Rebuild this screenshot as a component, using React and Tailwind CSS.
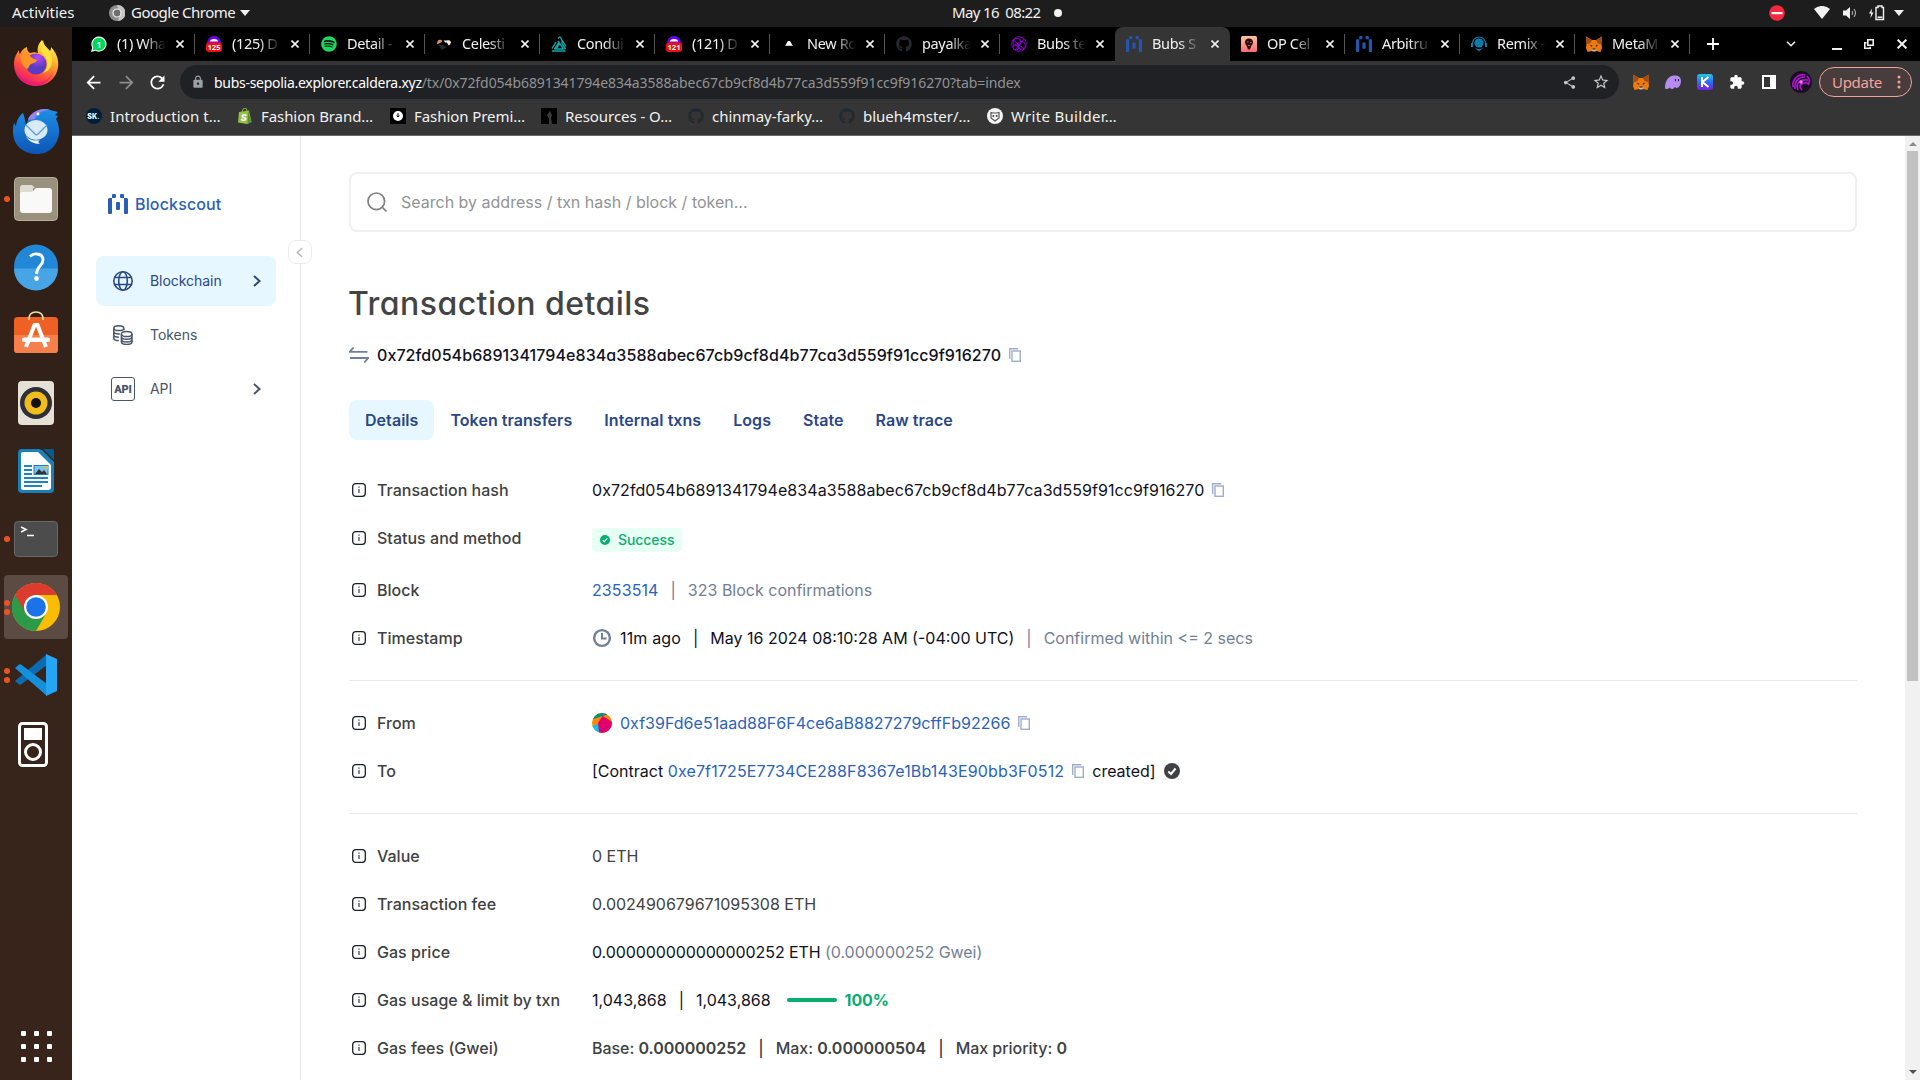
import React from 'react';
import { FaGithub, FaSpotify } from 'react-icons/fa';
import { MdArrowBack, MdArrowForward, MdRefresh, MdLock, MdShare, MdStarBorder, MdExtension } from 'react-icons/md';

/* ---------- favicons ---------- */

function WhatsApp() {
  return (
    <svg viewBox="0 0 16 16" className="size-4">
      <path d="M0 16 1.2 11.6A7.6 7.6 0 1 1 4.4 14.8Z" fill="#fff" />
      <path d="M1.5 14.6 2.3 11.5A6.5 6.5 0 1 1 4.6 13.8Z" fill="#00d757" />
      <text x="8" y="11.6" textAnchor="middle" fontSize="9.5" fontWeight="600" fill="#fff" fontFamily="Noto Sans">1</text>
    </svg>
  );
}

function CountIcon({ count }) {
  return (
    <svg viewBox="0 0 16 16" className="size-4">
      <path d="M1 8a7 8 0 0 1 14 0z" fill="#6d00f6" />
      <path d="M4 5.5a4 2.5 0 0 1 8 0z" fill="#fff" />
      <rect y="6.5" width="16" height="9.5" rx="3" fill="#f60c0c" />
      <text x="8" y="14.2" textAnchor="middle" fontSize="7.6" fontWeight="700" fill="#fff" fontFamily="Noto Sans">{count}</text>
    </svg>
  );
}

function Celestia() {
  return (
    <svg viewBox="0 0 16 16" className="size-4">
      <path d="M1 8.500C1 5 2 3.800 4 3.800S6.500 5 6 6z" fill="#d98e5f" />
      <path d="M10 5.500c1-1.700 4.500-1.700 4.800.8 0 1.500-1 3-2 3.200z" fill="#ffe8cf" />
      <path d="M7.500 4.500h3.500l-1 2.500z" fill="#fff" />
      <path d="M2.500 9h5l3 2.500-5 2.500z" fill="#2c262c" />
    </svg>
  );
}

function Conduit() {
  return (
    <svg viewBox="0 0 16 16" className="size-4" fill="none" stroke="#12a5a8" strokeWidth="1.400">
      <path d="M1 12.500 5 6M7 2.500 9 1l6 9.500M7 5l5.500 8H5l3.500-5.500M1 15h13.500M3 12.500h1L7.500 7M11 4.500v3l3.500 5.500" />
    </svg>
  );
}

function Triangle() {
  return <svg viewBox="0 0 16 16" className="size-4"><path d="M8 5c2 0 1.600 1.700 4 4.700H4C6.400 6.700 6 5 8 5" fill="#fff" /></svg>;
}

function Bubbles() {
  return (
    <svg viewBox="0 0 16 16" className="size-4" fill="none" stroke="#8a00cf" strokeWidth="1">
      <circle cx="8" cy="8" r="7.300" />
      <circle cx="6" cy="6" r="3.800" />
      <circle cx="10.500" cy="9.500" r="4" />
      <circle cx="5" cy="11" r="3" />
      <path d="M2 4l11 9M13 3 4 14" />
    </svg>
  );
}

function BlockscoutMark({ className = 'size-4', fill = '#2456b0' }) {
  return (
    <svg viewBox="0 0 20 20" className={className} fill={fill}>
      <path d="M0 4.500h1V4h3V1a1 1 0 0 1 1-1h2a1 1 0 0 1 1 1v2a1 1 0 0 1-1 1H4v15a1 1 0 0 1-1 1H1a1 1 0 0 1-1-1z" />
      <path d="M20 4.500h-1V4h-3V1a1 1 0 0 0-1-1h-2a1 1 0 0 0-1 1v2a1 1 0 0 0 1 1h3v15a1 1 0 0 0 1 1h2a1 1 0 0 0 1-1z" />
      <rect x="8" y="8" width="4" height="8" rx="1" />
    </svg>
  );
}

function OpCel() {
  return (
    <svg viewBox="0 0 16 16" className="size-4">
      <defs><linearGradient id="opc" x2="0" y2="1"><stop stopColor="#ffc39c" /><stop offset="1" stopColor="#ff6a78" /></linearGradient></defs>
      <rect width="16" height="16" rx="1.500" fill="url(#opc)" />
      <path d="M8 2.500c2.500 0 4 1.500 4 4 0 1.700-1 2.500-1.500 3L9 13.500H7L5.500 9.500C5 9 4 8.200 4 6.500c0-2.500 1.500-4 4-4" fill="#2a0d10" />
      <path d="M6 5.500h1.500v1H6zM9 6h1.500v1H9zM7 9h2v1H7z" fill="#c9535a" />
    </svg>
  );
}

function Remix() {
  return (
    <svg viewBox="0 0 16 16" className="size-4">
      <path d="M1.500 8.500v-1a6.500 6.500 0 0 1 13 0v1" fill="none" stroke="#0a7cae" strokeWidth="1.100" />
      <circle cx="8" cy="7" r="4.600" fill="#0a7cae" />
      <path d="M0 7h2v4H0zM14 7h2v4h-2zM4 12l4 3.500 4-3.500-4 1.200z" fill="#0a7cae" />
    </svg>
  );
}

function Fox() {
  return (
    <svg viewBox="0 0 16 16" className="size-4">
      <path d="M0 .5 6 4h4l6-3.500-.5 7.500.5 4-1.500 4L10 15H6l-4.500 1L0 12l.5-4z" fill="#f0790f" />
      <path d="M0 .5 6 4 4.500 7 .5 8.500zM16 .5 10 4l1.500 3 4 1.500z" fill="#a04f16" />
      <path d="M3.500 8.500 6.300 9.500 6 11zM12.500 8.500 9.700 9.500 10 11z" fill="#2b2b2b" />
      <path d="M5.500 13h5l-1 2.500h-3z" fill="#c9bdb5" />
      <path d="M6.700 12.600h2.600l.4 1H6.300z" fill="#161616" />
    </svg>
  );
}

/* ---------- top bar ---------- */

function TopBar() {
  return (
    <div className="grid h-[27px] shrink-0 grid-cols-[952px_auto_1fr] items-center bg-[#1d1d1d] pb-[2px] text-[15px] text-[#f2f2f2]">
      <div className="flex items-center">
        <span className="ml-3 w-[62px]">Activities</span>
        <svg viewBox="0 0 16 16" className="ml-[35px] size-4">
          <circle cx="8" cy="8" r="8" fill="#8e8e8e" />
          <path d="M8 0a8 8 0 0 1 1 16l2-7z" fill="#c6c6c6" />
          <circle cx="8" cy="8" r="4" fill="#6e6e6e" stroke="#f0f0f0" strokeWidth="1.200" />
        </svg>
        <span className="ml-[6px] w-[104px] tracking-[-0.5px] whitespace-nowrap">Google Chrome</span>
        <svg viewBox="0 0 10 6" className="ml-[5px] h-[6px] w-[10px]"><path d="M0 0h10L5 6z" fill="#f2f2f2" /></svg>
      </div>
      <div className="flex items-center">
        <span className="w-[89px] tracking-[-0.65px] whitespace-pre">May 16  08:22</span>
        <span className="ml-[13px] size-2 rounded-full bg-[#f2f2f2]" />
      </div>
      <div className="flex items-center justify-end pr-4">
        <svg viewBox="0 0 16 16" className="size-4"><circle cx="8" cy="8" r="7.800" fill="#f52840" /><rect x="2.500" y="7" width="11" height="2.200" fill="#fff" /></svg>
        <svg viewBox="0 0 16 13" className="ml-[29px] h-[13px] w-4"><path d="M0 3a12 12 0 0 1 16 0L8 13z" fill="#f2f2f2" /></svg>
        <svg viewBox="0 0 16 14" className="ml-[12px] h-[14px] w-4">
          <path d="M1 4.500h3L8 1v12L4 9.500H1z" fill="#f2f2f2" />
          <path d="M10 5q1.500 2 0 4M12 3q3 4 0 8" fill="none" stroke="#a9a9a9" strokeWidth="1.200" />
        </svg>
        <svg viewBox="0 0 17 16" className="ml-[10px] h-4 w-[17px]">
          <path d="M4 3.500 1 8.500h2L2.500 13l3-5.500h-2z" fill="#f2f2f2" />
          <path d="M8 2.500h2V1h4v1.500h1.500v12H8z" fill="none" stroke="#f2f2f2" strokeWidth="1.400" />
          <path d="M9.500 11.500h5V13h-5z" fill="#f2f2f2" />
        </svg>
        <svg viewBox="0 0 10 6" className="ml-[9px] h-[6px] w-[10px]"><path d="M0 0h10L5 6z" fill="#f2f2f2" /></svg>
      </div>
    </div>
  );
}

/* ---------- dock ---------- */

function Dots({ count }) {
  return (
    <span className="absolute left-1 flex flex-col gap-[3px]">
      {Array.from({ length: count }, (_, i) => <i key={i} className="size-[6px] rounded-full bg-[#e95420]" />)}
    </span>
  );
}

const dock = [
  {
    name: 'firefox',
    art: (
      <svg viewBox="0 0 48 48" className="size-12">
        <defs>
          <linearGradient id="ff1" x1=".8" y1=".1" x2=".3" y2="1"><stop stopColor="#fff04a" /><stop offset=".35" stopColor="#ffa12a" /><stop offset=".7" stopColor="#ff4a3e" /><stop offset="1" stopColor="#e3107e" /></linearGradient>
          <radialGradient id="ff2" cx=".6" cy=".2"><stop stopColor="#b94bf5" /><stop offset="1" stopColor="#5a3bc4" /></radialGradient>
        </defs>
        <path d="M30 1c1 5 5 7 8 11 1-2 1-3 1-4 8 8 9 19 5 27-4 8-12 12-20 12C11 47 2 37 2 25c0-7 3-11 5-14 0 2 0 3 1 4 1-3 4-6 7-7 0 3 1 5 3 6 3-1 6-1 8 0-1-5 0-9 4-13" fill="url(#ff1)" />
        <circle cx="24" cy="25" r="10.500" fill="url(#ff2)" />
        <path d="M8 17c4-2 9-2 11 1 2 2 5 2 6 3-1 3-4 3-6 4-2 1-2 4-4 5-3-1-6-7-7-13" fill="#ff9528" />
        <path d="M31 1c-4 5-4 10 1 15 5 6 4 14-1 18 7-2 10-9 9-15-1-7-8-10-9-18" fill="#ffe23d" />
        <path d="M4 31c5 14 28 18 37 3-3 8-10 12.500-17 12.500C15 46.500 7 41 4 31" fill="#f0147a" opacity=".65" />
      </svg>
    ),
  },
  {
    name: 'thunderbird',
    art: (
      <svg viewBox="0 0 48 48" className="size-12">
        <defs><linearGradient id="tb" x2="0" y2="1"><stop stopColor="#1e8fe8" /><stop offset="1" stopColor="#0d55b5" /></linearGradient></defs>
        <path d="M16 13C20 5 29 0 38 3l8 2-3 3 3 1-2 3c8 14 0 35-19 35C12 47 1 39 1 25c0-4 0-7 1-9l2 3C5 12 8 8 11 6c2 4 2 9 3 12z" fill="url(#tb)" />
        <path d="M16 12C20 4 30 0 38 3c-8 0-14 4-15 9l-6 1" fill="#9a84ec" />
        <circle cx="26" cy="7" r="1.400" fill="#fff" />
        <ellipse cx="24" cy="23" rx="11.500" ry="10" fill="#d8ebfc" />
        <path d="m14 18 9 9c1 1 2 1 3 0l9-9" fill="none" stroke="#5c9bdc" strokeWidth="1.300" />
        <path d="M14 29c4 5 9 5 14 4-3 2-1 3 0 4-6 0-12-3-14-8" fill="#eef7ff" />
      </svg>
    ),
  },
  {
    name: 'files', dots: 1,
    art: (
      <svg viewBox="0 0 48 48" className="size-12">
        <rect x="2.500" y="2.500" width="43" height="43" rx="4" fill="#9a917c" stroke="#b5ad9b" />
        <path d="M8 13q0-3 3-3h9l3 3h-2v6H8z" fill="#dedbd0" />
        <path d="M8 19q0-2 2-2h9q2 0 3-2t3-2h12q3 0 3 3v19q0 3-3 3H11q-3 0-3-3z" fill="#f9f9f7" />
      </svg>
    ),
  },
  {
    name: 'help',
    art: (
      <svg viewBox="0 0 48 48" className="size-12">
        <circle cx="24" cy="23.500" r="22" fill="#2287d6" />
        <path d="M2 25.500a22 22 0 0 0 44 0z" fill="#47a5e5" />
        <path d="M18 13.500q3-3 7-2.500 6 .5 6 6 0 3-3 6t-3.500 8" fill="none" stroke="#fff" strokeWidth="2.800" />
        <circle cx="24.500" cy="35.500" r="2.400" fill="#fff" />
      </svg>
    ),
  },
  {
    name: 'software',
    art: (
      <svg viewBox="0 0 48 48" className="size-12">
        <rect x="2" y="6" width="44" height="36" rx="3.500" fill="#ef6024" />
        <path d="M2 24h44v14.500a3.500 3.500 0 0 1-3.500 3.500h-37A3.500 3.500 0 0 1 2 38.500z" fill="#f5804b" />
        <path d="M17 9V8q0-7 7-7t7 7v1" fill="none" stroke="#f6dba4" strokeWidth="1.600" />
        <path d="M14 36 22.500 14h3L34 36" fill="none" stroke="#fff" strokeWidth="4" />
        <rect x="10" y="26.500" width="28" height="4.500" rx="2.200" fill="#fff" />
      </svg>
    ),
  },
  {
    name: 'rhythmbox',
    art: (
      <svg viewBox="0 0 48 48" className="size-12">
        <rect x="6" y="2" width="36" height="44" rx="4" fill="#e5e1d6" />
        <circle cx="24" cy="24" r="16" fill="#2f2f38" />
        <circle cx="24" cy="24" r="11.500" fill="#f0bd1c" />
        <circle cx="24" cy="24" r="5" fill="#111" />
      </svg>
    ),
  },
  {
    name: 'writer',
    art: (
      <svg viewBox="0 0 48 48" className="size-12">
        <path d="M10 2h17l3 1 12 12v27q0 4-4 4H10q-4 0-4-4V6q0-4 4-4" fill="#1b7fb8" />
        <path d="M31 2h9q2 0 2 2v9z" fill="#0a5c8e" />
        <path d="M11 5h15l13 13v22q0 3-3 3H11q-2 0-2-3V7q0-2 2-2" fill="#fff" />
        <path d="M12 19h8M12 23h8M12 27h8M12 31h24M12 35h24M12 39h18" stroke="#1d84bd" strokeWidth="1.800" />
        <rect x="22" y="18.500" width="14" height="9" fill="#7fc5ee" stroke="#1d84bd" />
        <path d="m23 27 4-5 3 3 2-2 3 4z" fill="#333" />
        <path d="M32 19h4v4z" fill="#f8b91b" />
      </svg>
    ),
  },
  {
    name: 'terminal', dots: 1,
    art: (
      <svg viewBox="0 0 48 48" className="size-12">
        <rect x="2.500" y="6.500" width="43" height="35" rx="3.500" fill="#4c4c4c" stroke="#686868" />
        <path d="m9 12 5 2.500-5 2.500M15 20.500h7" fill="none" stroke="#fff" strokeWidth="1.600" />
      </svg>
    ),
  },
  {
    name: 'chrome', dots: 2, active: true,
    art: (
      <svg viewBox="0 0 48 48" className="size-12">
        <circle cx="24" cy="24" r="24" fill="#fbbc05" />
        <path d="M24 24 3.200 12A24 24 0 0 0 24 48l10.500-18z" fill="#2b9b48" />
        <path d="M3.200 12a24 24 0 0 1 41.600 0H24L13.600 30z" fill="#dd3b2e" />
        <circle cx="24" cy="24" r="12" fill="#fff" />
        <circle cx="24" cy="24" r="9.800" fill="#1a73e8" />
      </svg>
    ),
  },
  {
    name: 'vscode', dots: 2,
    art: (
      <svg viewBox="0 0 48 48" className="size-12">
        <path d="m3 30 4 3.500q1 .5 2 0L35 14V3z" fill="#0b6cb2" />
        <path d="m3 17 4-3.500q1-.5 2 0L35 33v12z" fill="#1490dc" />
        <path d="M34 3 45 8v32l-11 5z" fill="#25a5f3" />
      </svg>
    ),
  },
  {
    name: 'player',
    art: (
      <svg viewBox="0 0 48 48" className="size-12">
        <rect x="7.500" y="4.500" width="27" height="42" rx="3" fill="none" stroke="#fff" strokeWidth="3" />
        <rect x="12" y="9" width="18" height="12" fill="#fff" />
        <circle cx="21" cy="33" r="7.500" fill="none" stroke="#fff" strokeWidth="3" />
      </svg>
    ),
  },
];

function Dock() {
  return (
    <div className="flex w-[72px] shrink-0 flex-col bg-linear-to-b from-[#2b1c15] via-[#36241a] to-[#38241a] pt-[2px]">
      {dock.map((d) => (
        <div key={d.name} className="relative flex h-[68px] items-center justify-center">
          <div className={d.active ? 'flex size-16 items-center justify-center rounded-[4px] bg-[#5b4b43]' : 'flex size-16 items-center justify-center'}>{d.art}</div>
          {d.dots && <Dots count={d.dots} />}
        </div>
      ))}
      <div className="mt-auto mb-[18px] grid grid-cols-3 gap-[8px] self-center">
        {Array.from({ length: 9 }, (_, i) => <i key={i} className="size-[5px] rounded-[1px] bg-white" />)}
      </div>
    </div>
  );
}

/* ---------- browser chrome ---------- */

const tabs = [
  { icon: <WhatsApp />, text: '(1) Wha' },
  { icon: <CountIcon count="125" />, text: '(125) D' },
  { icon: <FaSpotify className="size-4 text-[#1ed760]" />, text: 'Detail -' },
  { icon: <Celestia />, text: 'Celesti' },
  { icon: <Conduit />, text: 'Condui' },
  { icon: <CountIcon count="121" />, text: '(121) D' },
  { icon: <Triangle />, text: 'New Ro' },
  { icon: <FaGithub className="size-4 text-[#24292f]" />, text: 'payalka' },
  { icon: <Bubbles />, text: 'Bubs te' },
  { icon: <BlockscoutMark />, text: 'Bubs S', active: true },
  { icon: <OpCel />, text: 'OP Cel' },
  { icon: <BlockscoutMark />, text: 'Arbitru' },
  { icon: <Remix />, text: 'Remix -' },
  { icon: <Fox />, text: 'MetaM' },
];

function Cross({ className = 'size-2' }) {
  return <svg viewBox="0 0 8 8" className={className}><path d="m.5.5 7 7m0-7-7 7" stroke="#f2f2f2" strokeWidth="1.600" /></svg>;
}

function TabStrip() {
  return (
    <div className="flex h-[34px] items-center bg-black pl-[8px]">
      {tabs.map((t, i) => (
        <div
          key={i}
          className={
            t.active
              ? 'flex h-full w-[115px] shrink-0 items-center rounded-t-lg bg-[#353535] pb-px pl-[11px]'
              : 'flex h-full w-[115px] shrink-0 items-center pb-px pl-[11px]'
          }
        >
          {t.icon}
          <span className="ml-[10px] w-[49px] mask-r-from-55% text-[14.500px] tracking-[-0.35px] whitespace-nowrap text-[#f1f1f1]">{t.text}</span>
          <Cross className="ml-[10px] size-2" />
          {!t.active && i !== 8 && <i className="ml-auto h-5 w-px bg-[#555]" />}
        </div>
      ))}
      <svg viewBox="0 0 12 12" className="ml-[17px] size-3"><path d="M6 0v12M0 6h12" stroke="#fff" strokeWidth="1.800" /></svg>
      <svg viewBox="0 0 10 6" className="ml-[67px] h-[6px] w-[10px]"><path d="m1 .7 4 4 4-4" fill="none" stroke="#eee" strokeWidth="1.600" /></svg>
      <i className="mt-[9px] ml-[36px] h-[2px] w-[10px] bg-[#eee]" />
      <svg viewBox="0 0 10 10" className="ml-[22px] size-[10px]" fill="none" stroke="#eee" strokeWidth="1.600"><path d="M3.800.8h5.400v5.400H3.800zM2.500 3.800H.8v5.400h5.400V7.800" /></svg>
      <Cross className="ml-[23px] size-[10px]" />
    </div>
  );
}

function Toolbar() {
  return (
    <div className="flex h-[42px] items-center bg-[#353535] pl-[11px]">
      <MdArrowBack className="size-[21px] text-white" />
      <MdArrowForward className="ml-[12px] size-[21px] text-[#8b8b8b]" />
      <MdRefresh className="ml-[10px] size-[21px] text-white" />
      <div className="ml-[12px] flex h-[34px] w-[1439px] items-center rounded-full bg-[#202124] pr-[9px] pl-[11px]">
        <MdLock className="size-[14px] text-[#9aa0a6]" />
        <div className="ml-[9px] text-[14px] whitespace-nowrap">
          <span className="tracking-[-0.28px] text-white">bubs-sepolia.explorer.caldera.xyz</span>
          <span className="tracking-[-0.08px] text-[#919396]">/tx/0x72fd054b6891341794e834a3588abec67cb9cf8d4b77ca3d559f91cc9f916270?tab=index</span>
        </div>
        <MdShare className="ml-auto size-[15px] text-[#c4c7c5]" />
        <MdStarBorder className="ml-[15px] size-[18px] text-[#c4c7c5]" />
      </div>
      <div className="ml-[14px] flex items-center gap-4">
        <Fox />
        <svg viewBox="0 0 16 16" className="size-4"><path d="M0 14C0 6 4 2 9 1.500c5-.5 7 2 7 5.500s-2 7-4.500 7c-1 0-1-1-1.500-1s-1 2-3 2-1.500-1.500-2-1.500S3.500 15 2 15s-2-.5-2-1" fill="#b78cf0" /><path d="M10.500 5v2.200M13.500 5v2.200" stroke="#352a45" strokeWidth="1.200" /></svg>
        <svg viewBox="0 0 16 16" className="size-4">
          <defs><linearGradient id="kep" x2="0" y2="1"><stop stopColor="#1ecbe8" /><stop offset=".5" stopColor="#2f6bf0" /><stop offset="1" stopColor="#7a1ee8" /></linearGradient></defs>
          <rect width="16" height="16" rx="3" fill="url(#kep)" />
          <path d="M5 3v10M11.500 3 5.500 8l6 5" fill="none" stroke="#fff" strokeWidth="2" />
        </svg>
        <MdExtension className="size-4 text-white" />
        <svg viewBox="0 0 16 16" className="size-4"><path d="M1 1h14v14H1zM3 3v10h6V3z" fill="#fff" fillRule="evenodd" /></svg>
      </div>
      <svg viewBox="0 0 22 22" className="ml-[13px] size-[22px]">
        <circle cx="11" cy="11" r="11" fill="#1c0d26" />
        <path d="M3 16C2 8 9 2 15 4M5 18c-1-7 3-12 10-12M8 19C5 12 10 8 18 9M12 19c-4-4-1-8 6-7M17 5c3 3 3 6 1 9" fill="none" stroke="#b012cf" strokeWidth="1.700" />
        <circle cx="11" cy="11" r="1.800" fill="#f07be8" />
      </svg>
      <div className="ml-[7px] flex h-[30px] w-[93px] items-center rounded-full border border-[#f0a39b] bg-[#493c3c] pl-[12px] text-[15px] text-[#f3a59d]">
        <span className="tracking-[-0.3px]">Update</span>
        <svg viewBox="0 0 4 14" className="ml-[15px] h-[14px] w-1" fill="#f3a59d"><circle cx="2" cy="2" r="1.500" /><circle cx="2" cy="7" r="1.500" /><circle cx="2" cy="12" r="1.500" /></svg>
      </div>
    </div>
  );
}

const githubMark = <FaGithub className="size-4 text-[#24292f]" />;

function Bookmark({ icon, className, children }) {
  return <div className={'flex items-center gap-2 text-[15px] whitespace-nowrap text-[#f1f1f1] ' + className}>{icon}<span>{children}</span></div>;
}

function Bookmarks() {
  return (
    <div className="flex h-[33px] items-center border-b border-[#6a6a6a] bg-[#353535] pb-[6px] pl-[14px]">
      <Bookmark className="w-[151px] tracking-[0.1px]" icon={<svg viewBox="0 0 16 16" className="size-4"><circle cx="8" cy="8" r="8" fill="#001e3c" /><text x="7.500" y="10.500" textAnchor="middle" fontSize="7" fontWeight="800" fill="#fff" fontFamily="Inter">SK<tspan fill="#1ed7a0">.</tspan></text></svg>}>Introduction t…</Bookmark>
      <Bookmark className="w-[153px] tracking-[-0.08px]" icon={<svg viewBox="0 0 16 16" className="size-4"><path d="M2 4 12 2.500 14.500 14 10 16 1 14.500z" fill="#95bf47" /><path d="m11 2.500 3.500 11.500L10.500 16z" fill="#5e8e3e" /><path d="M5 4q1-4 3-4t2 3.500" fill="none" stroke="#95bf47" /><text x="6.800" y="12.500" textAnchor="middle" fontSize="9" fontWeight="800" fontStyle="italic" fill="#fff" fontFamily="Inter">S</text></svg>}>Fashion Brand…</Bookmark>
      <Bookmark className="w-[151px] tracking-[-0.07px]" icon={<svg viewBox="0 0 16 16" className="size-4"><rect width="16" height="16" fill="#000" /><circle cx="8" cy="8" r="5" fill="#fff" /><path d="M8 5v4M6.500 7.500 8 9l1.500-1.500" stroke="#000" fill="none" /></svg>}>Fashion Premi…</Bookmark>
      <Bookmark className="w-[147px] tracking-[-0.05px]" icon={<svg viewBox="0 0 16 16" className="size-4"><rect width="16" height="16" fill="#000" /><path d="m9 3 2 4-1 3 1 6H8V11L6 7z" fill="#3b3b3b" /></svg>}>Resources - O…</Bookmark>
      <Bookmark className="w-[151px]" icon={githubMark}>chinmay-farky…</Bookmark>
      <Bookmark className="w-[148px]" icon={githubMark}>blueh4mster/…</Bookmark>
      <Bookmark className="tracking-[0.3px]" icon={<svg viewBox="0 0 16 16" className="size-4"><circle cx="8" cy="8" r="8" fill="#f5f5f5" /><path d="M4 4.500 6 5h4l2-.5V10l-4 3-4-3z" fill="none" stroke="#555" strokeWidth="1.200" /><circle cx="6.300" cy="8" r="1" fill="#444" /><circle cx="9.700" cy="8" r="1" fill="#444" /></svg>}>Write Builder…</Bookmark>
    </div>
  );
}

/* ---------- explorer page ---------- */

function Chevron() {
  return <svg viewBox="0 0 8 12" className="ml-auto h-3 w-2" fill="none" stroke="currentColor" strokeWidth="2"><path d="m1 1 5.500 5L1 11" /></svg>;
}

function NavItem({ icon, label, active, arrow }) {
  return (
    <div className={'flex h-[50px] items-center rounded-lg pr-[15px] pl-[15px] text-sm ' + (active ? 'bg-[#e6f7ff] text-[#2a4786]' : 'text-[#4a5568]')}>
      <span className="flex w-6 justify-center">{icon}</span>
      <span className="ml-[15px] tracking-[-0.05px]">{label}</span>
      {arrow && <Chevron />}
    </div>
  );
}

function Sidebar() {
  return (
    <aside className="relative w-[229px] shrink-0 border-r border-[#e9e9ea] px-6">
      <div className="mt-[58px] flex h-5 items-center pl-3 text-[#2b5fb5]">
        <BlockscoutMark className="size-5" fill="#2b5fb5" />
        <span className="ml-[7px] text-[16px] font-medium tracking-[0.15px] [font-feature-settings:'cv11']">Blockscout</span>
      </div>
      <nav className="mt-[42px] flex flex-col gap-1">
        <NavItem
          active
          arrow
          label="Blockchain"
          icon={
            <svg viewBox="0 0 20 20" className="size-5" fill="none" stroke="currentColor" strokeWidth="1.600">
              <circle cx="10" cy="10" r="9.200" /><ellipse cx="10" cy="10" rx="4.300" ry="9.200" /><path d="M1.500 6.500h17M1.500 13.500h17" />
            </svg>
          }
        />
        <NavItem
          label="Tokens"
          icon={
            <svg viewBox="0 0 20 20" className="size-5" fill="none" stroke="currentColor" strokeWidth="1.500">
              <ellipse cx="5.800" cy="3.200" rx="5" ry="2.400" />
              <path d="M.8 3.200v10c0 1.300 2.200 2.400 5 2.400M.8 6.500c0 1.300 2.200 2.400 5 2.400h1M.8 9.800c0 1.300 2.200 2.400 5 2.400M10.800 3.200v2" />
              <ellipse cx="13.700" cy="9" rx="5.300" ry="2.600" />
              <path d="M8.400 9v8c0 1.400 2.400 2.400 5.300 2.400S19 18.400 19 17V9M8.400 11.700c0 1.400 2.400 2.500 5.300 2.500s5.300-1.100 5.300-2.500M8.400 14.400c0 1.400 2.400 2.500 5.300 2.500s5.300-1.100 5.300-2.500" />
            </svg>
          }
        />
        <NavItem
          arrow
          label="API"
          icon={<span className="flex size-6 items-center justify-center rounded-[3px] border-[1.500px] border-[#4a5568] font-['Roboto'] text-[11px] leading-none font-black tracking-[-0.2px]">API</span>}
        />
      </nav>
      <button className="absolute top-[104px] -right-3 flex size-6 items-center justify-center rounded-lg border border-[#ececec] bg-white text-[#b9b9ba]">
        <svg viewBox="0 0 8 12" className="mr-px h-[11px] w-[7px]" fill="none" stroke="currentColor" strokeWidth="1.600"><path d="M7 1 1.500 6 7 11" /></svg>
      </button>
    </aside>
  );
}

function Copy() {
  return (
    <svg viewBox="0 0 12 14" className="ml-2 h-[14px] w-3 shrink-0" fill="none" stroke="#a0aec8" strokeWidth="1.400">
      <path d="M.7 11V.7h8.500" /><rect x="3" y="3" width="8.300" height="10.300" />
    </svg>
  );
}

function Info() {
  return (
    <svg viewBox="0 0 14 14" className="ml-[3px] size-[14px] shrink-0">
      <rect x=".7" y=".7" width="12.600" height="12.600" rx="3" fill="none" stroke="#1a2030" strokeWidth="1.300" />
      <path d="M7 3.500v1.200M7 6v4" stroke="#55555f" strokeWidth="1.400" />
    </svg>
  );
}

function Row({ label, muted, children }) {
  return (
    <div className="grid grid-cols-[243px_1fr] items-start">
      <div className="flex h-6 items-center text-[#404142]">
        <Info />
        <span className="ml-[11px] font-medium tracking-[0.02px]">{label}</span>
      </div>
      <div className={'flex min-h-6 items-center whitespace-nowrap ' + (muted ? 'text-[#404142]' : 'text-[#101122]')}>{children}</div>
    </div>
  );
}

const Sep = () => <span className="mx-3">|</span>;
const Divider = () => <div className="my-[6px] h-px bg-[#e9e9ea]" />;

function Main() {
  return (
    <main className="flex min-w-0 flex-1 flex-col pr-12 pl-[48px]">
      <div className="mt-9 flex h-[60px] shrink-0 items-center rounded-lg border-2 border-[#f0f0f1] pl-4 text-[#929394]">
        <svg viewBox="0 0 20 20" className="size-5" fill="none" stroke="#808182" strokeWidth="1.700"><circle cx="9.300" cy="9.300" r="8.300" /><path d="m15 15 4.500 4.500" /></svg>
        <span className="ml-[14px]">Search by address / txn hash / block / token...</span>
      </div>
      <h1 className="mt-[52px] -ml-px text-[32px] leading-10 font-medium tracking-[0.46px] text-[#444] [font-feature-settings:'cv11']">Transaction details</h1>
      <div className="mt-[19px] flex h-6 items-center font-medium text-[#101122]">
        <svg viewBox="0 0 20 16" className="h-4 w-5" fill="none" stroke="#718096" strokeWidth="1.800"><path d="M4.500.5.800 4.800H18.500M1 11h18.200l-4 4.500" /></svg>
        <span className="ml-2 tracking-[0.075px] [font-feature-settings:'cv11']">0x72fd054b6891341794e834a3588abec67cb9cf8d4b77ca3d559f91cc9f916270</span>
        <Copy />
      </div>
      <div className="mt-[33px] flex h-10 items-center font-semibold tracking-[0.05px] text-[#2a4786]">
        <span className="flex h-10 items-center rounded-lg bg-[#e6f7ff] px-4">Details</span>
        {['Token transfers', 'Internal txns', 'Logs', 'State', 'Raw trace'].map((t) => <span key={t} className="px-4">{t}</span>)}
      </div>
      <div className="mt-[38px] flex flex-col gap-6">
        <Row label="Transaction hash"><span className="tracking-[0.065px]">0x72fd054b6891341794e834a3588abec67cb9cf8d4b77ca3d559f91cc9f916270</span><Copy /></Row>
        <Row label="Status and method">
          <span className="mt-[2px] mb-[2px] flex h-6 items-center rounded-[4px] bg-[#e8fff5] pr-2 pl-2 text-sm font-medium tracking-[-0.08px] text-[#08ad72]">
            <svg viewBox="0 0 10 10" className="size-[10px]"><circle cx="5" cy="5" r="5" fill="#08ad72" /><path d="m2.700 5.200 1.600 1.500 3-3.300" fill="none" stroke="#fff" strokeWidth="1.100" /></svg>
            <span className="ml-2">Success</span>
          </span>
        </Row>
        <Row label="Block"><span className="tracking-[0.1px] text-[#2b62bd]">2353514</span><span className="text-[#718096]"><Sep />323 Block confirmations</span></Row>
        <Row label="Timestamp">
          <svg viewBox="0 0 20 20" className="mr-2 size-5" fill="none" stroke="#718096" strokeWidth="2.400"><circle cx="10" cy="10" r="7.900" /><path d="M10 5v5.500h4.500" strokeWidth="2" /></svg>
          <span><span className="tracking-[0.15px]">11m ago</span><Sep />May 16 2024 08:10:28 AM (-04:00 UTC)</span><span className="text-[#718096]"><Sep />Confirmed within &lt;= 2 secs</span>
        </Row>
        <Divider />
        <Row label="From">
          <svg viewBox="0 0 20 20" className="mr-2 size-5">
            <defs><clipPath id="ball"><circle cx="10" cy="10" r="10" /></clipPath></defs>
            <g clipPath="url(#ball)"><rect width="20" height="20" fill="#ff8a00" /><path d="M0 0h20L14 2 3 5.500 0 6z" fill="#03907c" /><path d="M0 13l7-2.500V20H0z" fill="#05c8f2" /><path d="m10.500 3 10 6v11H7l-1-10z" fill="#e2006e" /></g>
          </svg>
          <span className="tracking-[0.02px] text-[#2b62bd]">0xf39Fd6e51aad88F6F4ce6aB8827279cffFb92266</span><Copy />
        </Row>
        <Row label="To">
          <span className="whitespace-pre">[Contract </span><span className="tracking-[0.145px] text-[#2b62bd]">0xe7f1725E7734CE288F8367e1Bb143E90bb3F0512</span><Copy />
          <span className="ml-2">created]</span>
          <svg viewBox="0 0 16 16" className="ml-2 size-4"><circle cx="8" cy="8" r="8" fill="#404142" /><path d="m4.300 8.500 2.700 2.500 4.500-5.500" fill="none" stroke="#fff" strokeWidth="2" /></svg>
        </Row>
        <Divider />
        <Row label="Value" muted>0 ETH</Row>
        <Row label="Transaction fee" muted>0.002490679671095308 ETH</Row>
        <Row label="Gas price"><span><span className="tracking-[-0.1px]">0.000000000000000252 ETH</span> <span className="tracking-[-0.03px] text-[#718096]">(0.000000252 Gwei)</span></span></Row>
        <Row label="Gas usage & limit by txn">
          <span>1,043,868<Sep />1,043,868</span>
          <i className="ml-4 h-1 w-[50px] rounded-full bg-[#08ad72]" />
          <span className="ml-2 font-bold tracking-[-0.1px] text-[#08ad72]">100%</span>
        </Row>
        <Row label="Gas fees (Gwei)" muted>
          <span className="font-medium tracking-[-0.04px]">Base: <b className="font-semibold">0.000000252</b><Sep />Max: <b className="font-semibold">0.000000504</b><Sep />Max priority: <b className="font-semibold">0</b></span>
        </Row>
      </div>
    </main>
  );
}

function Scrollbar() {
  return (
    <div className="flex w-[15px] shrink-0 flex-col items-center bg-[#f1f1f1]">
      <svg viewBox="0 0 8 4" className="mt-[6px] h-1 w-2"><path d="M0 4 4 0l4 4z" fill="#8a8a8a" /></svg>
      <div className="mt-[5px] h-[530px] w-[11px] bg-[#c1c1c1]" />
      <svg viewBox="0 0 8 4" className="mt-auto mb-[6px] h-1 w-2"><path d="m0 0 4 4 4-4z" fill="#505050" /></svg>
    </div>
  );
}

export default function App() {
  return (
    <div className="flex h-[1080px] w-[1920px] flex-col overflow-hidden bg-white font-['Noto_Sans',sans-serif]">
      <TopBar />
      <div className="flex min-h-0 flex-1">
        <Dock />
        <div className="flex min-w-0 flex-1 flex-col">
          <TabStrip />
          <Toolbar />
          <Bookmarks />
          <div className="flex min-h-0 flex-1 overflow-hidden font-['Inter',sans-serif] text-base leading-6">
            <Sidebar />
            <Main />
            <Scrollbar />
          </div>
        </div>
      </div>
    </div>
  );
}
